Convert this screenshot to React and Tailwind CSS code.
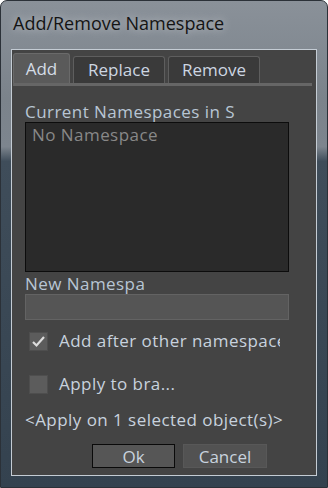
import React from 'react';

const font = { fontFamily: '"Open Sans", "Noto Sans", "DejaVu Sans", sans-serif' };

const Check = ({ checked }) => (
  <div className="w-[19px] h-[19px] bg-[#5c5c5c] border border-[#4e4e4e] flex items-center justify-center shrink-0">
    {checked && (
      <svg width="15" height="13" viewBox="0 0 15 13">
        <path d="M2 7 L5.5 10.5 L13 2" fill="none" stroke="#dcdcdc" strokeWidth="2.2" />
      </svg>
    )}
  </div>
);

export default function App() {
  const tabs = [
    { label: 'Add', w: 'w-[57px]', active: true },
    { label: 'Replace', w: 'w-[92px]' },
    { label: 'Remove', w: 'w-[92px]' },
  ];

  return (
    <div
      className="w-[328px] h-[488px] rounded-t-[7px] border border-[#2b3138] flex flex-col bg-[linear-gradient(180deg,#8a9199_0%,#7b838b_20%,#7d858e_30%,#3f4d5a_33%,#34424f_100%)] overflow-hidden"
      style={font}
    >
      {/* Title bar */}
      <div className="h-[48px] flex items-center pl-[12px] pb-[3px] shrink-0">
        <span className="text-[18px] text-[#141414] [text-shadow:0_0_8px_#c8ccd0]">Add/Remove Namespace</span>
      </div>

      {/* Client area */}
      <div className="mx-[10px] h-[427px] border border-[#c4ccd4] bg-[#444444] flex flex-col">
        {/* Tabs */}
        <div className="flex items-end gap-[3px] pl-[1px] mt-[3px] h-[30px]">
          {tabs.map((t) => (
            <div
              key={t.label}
              className={`${t.w} flex items-center justify-center rounded-t-[3px] text-[17px] leading-[20px] ${
                t.active
                  ? 'h-[30px] bg-[#5a5a5a] text-[#d4dce6] border-t border-x border-[#6a6a6a]'
                  : 'h-[27px] bg-[#3a3a3a] text-[#cdd6e2] border-t border-x border-[#5e5e5e]'
              }`}
            >
              {t.label}
            </div>
          ))}
        </div>
        <div className="h-[3px] bg-[#666666] ml-[1px] mr-[4px]" />

        {/* Tab content */}
        <div className="flex flex-col pl-[13px] pr-[27px] tracking-[0.45px]">
          <div className="mt-[16px] text-[17px] leading-[20px] text-[#b8c6d4] whitespace-nowrap">Current Namespaces in S</div>
          <div className="h-[150px] bg-[#2a2a2a] border border-[#0c0c0c] px-[6px] pt-[2px]">
            <div className="text-[17px] leading-[20px] text-[#888888]">No Namespace</div>
          </div>

          <div className="mt-[2px] text-[17px] leading-[20px] text-[#b8c6d4]">New Namespa</div>
          <div className="h-[26px] bg-[#555555] border border-[#636363]" />

          <div className="mt-[11px] flex items-center gap-[11px] pl-[4px] h-[20px]">
            <Check checked />
            <span className="text-[17px] leading-[20px] text-[#c8d2de] whitespace-nowrap overflow-hidden w-[221px]">
              Add after other namespace
            </span>
          </div>

          <div className="mt-[23px] flex items-center gap-[11px] pl-[4px] h-[20px]">
            <Check />
            <span className="text-[17px] leading-[20px] text-[#c8d2de]">Apply to bra...</span>
          </div>

          <div className="mt-[16px] text-[17px] leading-[20px] text-[#c8d2de] whitespace-nowrap">
            &lt;Apply on 1 selected object(s)&gt;
          </div>

          <div className="mt-[14px] flex gap-[8px] pl-[67px] tracking-normal">
            <div className="w-[83px] h-[24px] bg-[#565656] border border-[#0a0a0a] flex items-center justify-center text-[17px] leading-[20px] pt-[1px] text-[#c8d2de]">
              Ok
            </div>
            <div className="w-[84px] h-[24px] bg-[#525252] border border-[#585858] flex items-center justify-center text-[17px] leading-[20px] pt-[1px] text-[#c8d2de]">
              Cancel
            </div>
          </div>
        </div>
      </div>
    </div>
  );
}
